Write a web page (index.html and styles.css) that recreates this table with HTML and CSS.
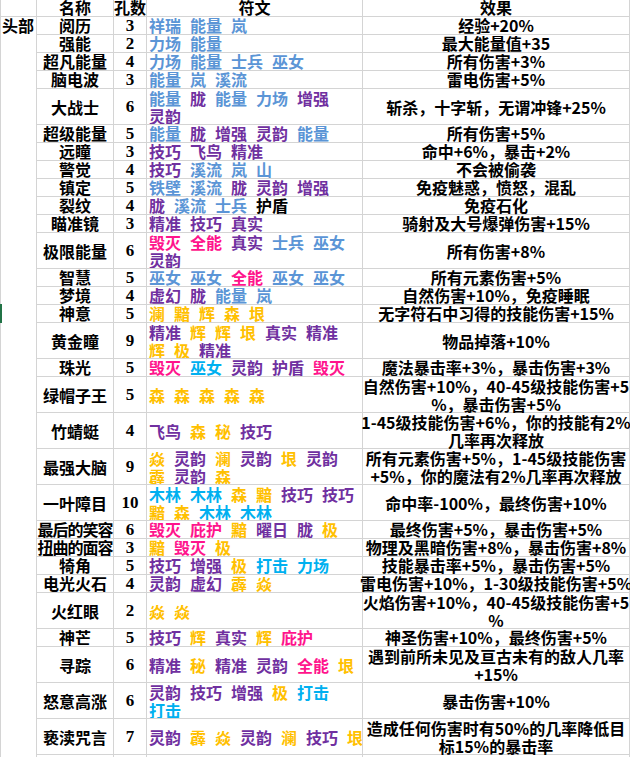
FILE: index.html
```html
<!DOCTYPE html>
<html lang="zh">
<head>
<meta charset="utf-8">
<title>头部符文</title>
<link rel="stylesheet" href="styles.css">
</head>
<body>
<div class="sheet">
  <div class="row head"><div class="c"></div><div class="c h">名称</div><div class="c h">孔数</div><div class="c h">符文</div><div class="c h">效果</div></div>
  <div class="part">头部</div>

  <div class="row r1"><div class="c name">阅历</div><div class="c num">3</div><div class="c runes"><div class="line"><span class="b">祥瑞</span><span class="b">能量</span><span class="b">岚</span></div></div><div class="c eff"><div>经验+20%</div></div></div>
  <div class="row r1"><div class="c name">强能</div><div class="c num">2</div><div class="c runes"><div class="line"><span class="b">力场</span><span class="b">能量</span></div></div><div class="c eff"><div>最大能量值+35</div></div></div>
  <div class="row r1"><div class="c name">超凡能量</div><div class="c num">4</div><div class="c runes"><div class="line"><span class="b">力场</span><span class="b">能量</span><span class="b">士兵</span><span class="b">巫女</span></div></div><div class="c eff"><div>所有伤害+3%</div></div></div>
  <div class="row r1"><div class="c name">脑电波</div><div class="c num">3</div><div class="c runes"><div class="line"><span class="b">能量</span><span class="b">岚</span><span class="b">溪流</span></div></div><div class="c eff"><div>雷电伤害+5%</div></div></div>
  <div class="row r2"><div class="c name">大战士</div><div class="c num">6</div><div class="c runes"><div class="line"><span class="b">能量</span><span class="p">胧</span><span class="b">能量</span><span class="b">力场</span><span class="p">增强</span></div><div class="line"><span class="p">灵韵</span></div></div><div class="c eff"><div>斩杀，十字斩，无谓冲锋+25%</div></div></div>
  <div class="row r1"><div class="c name">超级能量</div><div class="c num">5</div><div class="c runes"><div class="line"><span class="b">能量</span><span class="p">胧</span><span class="p">增强</span><span class="p">灵韵</span><span class="b">能量</span></div></div><div class="c eff"><div>所有伤害+5%</div></div></div>
  <div class="row r1"><div class="c name">远瞳</div><div class="c num">3</div><div class="c runes"><div class="line"><span class="p">技巧</span><span class="p">飞鸟</span><span class="p">精准</span></div></div><div class="c eff"><div>命中+6%，暴击+2%</div></div></div>
  <div class="row r1"><div class="c name">警觉</div><div class="c num">4</div><div class="c runes"><div class="line"><span class="p">技巧</span><span class="b">溪流</span><span class="b">岚</span><span class="b">山</span></div></div><div class="c eff"><div>不会被偷袭</div></div></div>
  <div class="row r1"><div class="c name">镇定</div><div class="c num">5</div><div class="c runes"><div class="line"><span class="b">铁壁</span><span class="b">溪流</span><span class="p">胧</span><span class="p">灵韵</span><span class="p">增强</span></div></div><div class="c eff"><div>免疫魅惑，愤怒，混乱</div></div></div>
  <div class="row r1"><div class="c name">裂纹</div><div class="c num">4</div><div class="c runes"><div class="line"><span class="p">胧</span><span class="b">溪流</span><span class="b">士兵</span><span class="k">护盾</span></div></div><div class="c eff"><div>免疫石化</div></div></div>
  <div class="row r1"><div class="c name">瞄准镜</div><div class="c num">3</div><div class="c runes"><div class="line"><span class="p">精准</span><span class="p">技巧</span><span class="p">真实</span></div></div><div class="c eff"><div>骑射及大号爆弹伤害+15%</div></div></div>
  <div class="row r2"><div class="c name">极限能量</div><div class="c num">6</div><div class="c runes"><div class="line"><span class="m">毁灭</span><span class="m">全能</span><span class="p">真实</span><span class="b">士兵</span><span class="b">巫女</span></div><div class="line"><span class="p">灵韵</span></div></div><div class="c eff"><div>所有伤害+8%</div></div></div>
  <div class="row r1"><div class="c name">智慧</div><div class="c num">5</div><div class="c runes"><div class="line"><span class="b">巫女</span><span class="b">巫女</span><span class="m">全能</span><span class="b">巫女</span><span class="b">巫女</span></div></div><div class="c eff"><div>所有元素伤害+5%</div></div></div>
  <div class="row r1"><div class="c name">梦境</div><div class="c num">4</div><div class="c runes"><div class="line"><span class="p">虚幻</span><span class="p">胧</span><span class="b">能量</span><span class="b">岚</span></div></div><div class="c eff"><div>自然伤害+10%，免疫睡眠</div></div></div>
  <div class="row r1"><div class="c name">神意</div><div class="c num">5</div><div class="c runes"><div class="line"><span class="g">澜</span><span class="g">黯</span><span class="g">辉</span><span class="g">森</span><span class="g">垠</span></div></div><div class="c eff"><div>无字符石中习得的技能伤害+15%</div></div></div>
  <div class="row r2"><div class="c name">黄金瞳</div><div class="c num">9</div><div class="c runes"><div class="line"><span class="p">精准</span><span class="g">辉</span><span class="g">辉</span><span class="g">垠</span><span class="p">真实</span><span class="p">精准</span></div><div class="line"><span class="g">辉</span><span class="g">极</span><span class="p">精准</span></div></div><div class="c eff"><div>物品掉落+10%</div></div></div>
  <div class="row r1"><div class="c name">珠光</div><div class="c num">5</div><div class="c runes"><div class="line"><span class="m">毁灭</span><span class="c2">巫女</span><span class="p">灵韵</span><span class="p">护盾</span><span class="m">毁灭</span></div></div><div class="c eff"><div>魔法暴击率+3%，暴击伤害+3%</div></div></div>
  <div class="row r2"><div class="c name">绿帽子王</div><div class="c num">5</div><div class="c runes"><div class="line"><span class="g">森</span><span class="g">森</span><span class="g">森</span><span class="g">森</span><span class="g">森</span></div></div><div class="c eff"><div>自然伤害+10%，40-45级技能伤害+5</div><div>%，暴击伤害+5%</div></div></div>
  <div class="row r2"><div class="c name">竹蜻蜓</div><div class="c num">4</div><div class="c runes"><div class="line"><span class="p">飞鸟</span><span class="g">森</span><span class="g">秘</span><span class="p">技巧</span></div></div><div class="c eff"><div>1-45级技能伤害+6%，你的技能有2%</div><div>几率再次释放</div></div></div>
  <div class="row r2"><div class="c name">最强大脑</div><div class="c num">9</div><div class="c runes"><div class="line"><span class="g">焱</span><span class="p">灵韵</span><span class="g">澜</span><span class="p">灵韵</span><span class="g">垠</span><span class="p">灵韵</span></div><div class="line"><span class="g">霹</span><span class="p">灵韵</span><span class="g">森</span></div></div><div class="c eff"><div>所有元素伤害+5%，1-45级技能伤害</div><div>+5%，你的魔法有2%几率再次释放</div></div></div>
  <div class="row r2"><div class="c name">一叶障目</div><div class="c num">10</div><div class="c runes"><div class="line"><span class="c2">木林</span><span class="c2">木林</span><span class="g">森</span><span class="g">黯</span><span class="p">技巧</span><span class="p">技巧</span></div><div class="line"><span class="g">黯</span><span class="g">森</span><span class="c2">木林</span><span class="c2">木林</span></div></div><div class="c eff"><div>命中率-100%，最终伤害+10%</div></div></div>
  <div class="row r1"><div class="c name tight">最后的笑容</div><div class="c num">6</div><div class="c runes"><div class="line"><span class="m">毁灭</span><span class="m">庇护</span><span class="g">黯</span><span class="p">曜日</span><span class="p">胧</span><span class="g">极</span></div></div><div class="c eff"><div>最终伤害+5%，暴击伤害+5%</div></div></div>
  <div class="row r1"><div class="c name tight">扭曲的面容</div><div class="c num">3</div><div class="c runes"><div class="line"><span class="g">黯</span><span class="m">毁灭</span><span class="g">极</span></div></div><div class="c eff"><div>物理及黑暗伤害+8%，暴击伤害+8%</div></div></div>
  <div class="row r1"><div class="c name">犄角</div><div class="c num">5</div><div class="c runes"><div class="line"><span class="p">技巧</span><span class="p">增强</span><span class="g">极</span><span class="c2">打击</span><span class="c2">力场</span></div></div><div class="c eff"><div>技能暴击率+5%，暴击伤害+5%</div></div></div>
  <div class="row r1"><div class="c name">电光火石</div><div class="c num">4</div><div class="c runes"><div class="line"><span class="p">灵韵</span><span class="p">虚幻</span><span class="g">霹</span><span class="g">焱</span></div></div><div class="c eff"><div>雷电伤害+10%，1-30级技能伤害+5%</div></div></div>
  <div class="row r2"><div class="c name">火红眼</div><div class="c num">2</div><div class="c runes"><div class="line"><span class="g">焱</span><span class="g">焱</span></div></div><div class="c eff"><div>火焰伤害+10%，40-45级技能伤害+5</div><div>%</div></div></div>
  <div class="row r1"><div class="c name">神芒</div><div class="c num">5</div><div class="c runes"><div class="line"><span class="p">技巧</span><span class="g">辉</span><span class="p">真实</span><span class="g">辉</span><span class="m">庇护</span></div></div><div class="c eff"><div>神圣伤害+10%，最终伤害+5%</div></div></div>
  <div class="row r2"><div class="c name">寻踪</div><div class="c num">6</div><div class="c runes"><div class="line"><span class="p">精准</span><span class="g">秘</span><span class="p">精准</span><span class="p">灵韵</span><span class="m">全能</span><span class="g">垠</span></div></div><div class="c eff"><div>遇到前所未见及亘古未有的敌人几率</div><div>+15%</div></div></div>
  <div class="row r2"><div class="c name">怒意高涨</div><div class="c num">6</div><div class="c runes"><div class="line"><span class="p">灵韵</span><span class="p">技巧</span><span class="p">增强</span><span class="g">极</span><span class="c2">打击</span></div><div class="line"><span class="c2">打击</span></div></div><div class="c eff"><div>暴击伤害+10%</div></div></div>
  <div class="row r2"><div class="c name">亵渎咒言</div><div class="c num">7</div><div class="c runes"><div class="line"><span class="p">灵韵</span><span class="g">霹</span><span class="g">焱</span><span class="p">灵韵</span><span class="g">澜</span><span class="p">技巧</span><span class="g">垠</span></div></div><div class="c eff"><div>造成任何伤害时有50%的几率降低目</div><div>标15%的暴击率</div></div></div>

  <div class="row end"><div class="c"></div><div class="c"></div><div class="c"></div><div class="c"></div></div>
  <div class="sel"></div>
</div>
</body>
</html>
```

FILE: styles.css
```css
html, body {
  margin: 0;
  padding: 0;
  background: #ffffff;
  overflow: hidden;
}

.sheet {
  position: relative;
  display: grid;
  grid-template-columns: 35px 76px 32px 215px 266px;
  gap: 1px;
  padding: 0 1px;
  width: 630px;
  box-sizing: border-box;
  background: #d4d4d4;
  font-family: "Noto Sans CJK SC", sans-serif;
  font-weight: 700;
  font-size: 16px;
  color: #000000;
}

.row {
  display: contents;
}

.c {
  background: #ffffff;
  display: flex;
  align-items: center;
  white-space: nowrap;
  line-height: 17px;
  box-sizing: border-box;
}

.head .c {
  height: 16px;
  align-items: flex-end;
  line-height: 16px;
  padding-bottom: 1px;
}

.r1 .c {
  height: 17px;
}

.r2 .c {
  height: 35px;
  line-height: 18px;
}

.end .c {
  height: 2px;
}

.h,
.name,
.num {
  justify-content: center;
}

.name.tight {
  letter-spacing: -1px;
}

.num {
  font-family: "Liberation Serif", "Noto Sans CJK SC", serif;
  font-size: 17px;
}

.part {
  grid-column: 1;
  grid-row: 2 / span 31;
  background: #ffffff;
  line-height: 17px;
  padding-left: 1px;
}

.runes {
  flex-direction: column;
  justify-content: center;
  align-items: flex-start;
  padding-left: 2px;
  overflow: hidden;
}

.line {
  display: flex;
}

.line span {
  margin-right: 9px;
}

.eff {
  flex-direction: column;
  justify-content: center;
  align-items: center;
}

.b { color: #5b95d6; }
.c2 { color: #00b0f0; }
.p { color: #7030a0; }
.m { color: #ff148c; }
.g { color: #ffc000; }
.k { color: #000000; }

.sel {
  position: absolute;
  left: 0;
  top: 304px;
  width: 2px;
  height: 19px;
  background: #217346;
}
```
